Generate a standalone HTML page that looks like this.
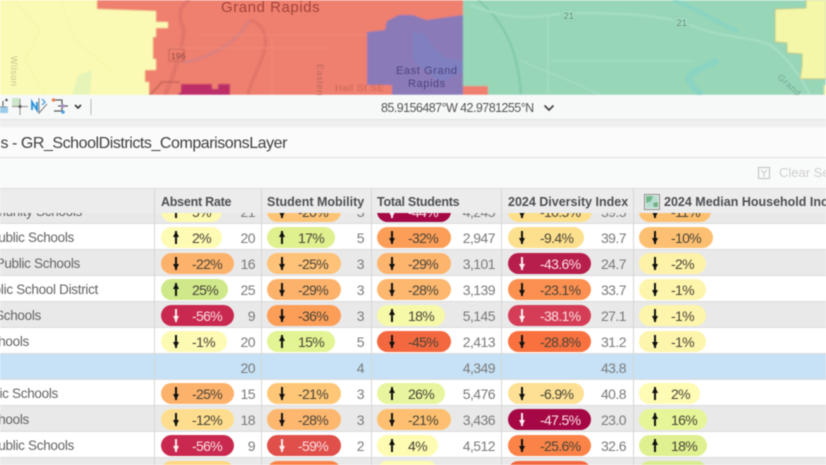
<!DOCTYPE html>
<html><head><meta charset="utf-8"><style>
html,body{margin:0;padding:0;background:#fff}
#w{position:relative;width:826px;height:465px;overflow:hidden;font-family:"Liberation Sans",sans-serif;filter:blur(.4px)}
#w div,#w svg{position:absolute}
.r{left:0;width:826px;height:26px;background:#fff;box-shadow:inset 0 -1px 0 #dcdcdc}
.g{background:#e9e9e9}
.b{background:#c7e2f6}
.n{top:6px;font-size:13.5px;line-height:16px;color:#636363;white-space:nowrap;letter-spacing:-.3px}
.v{top:6px;font-size:14px;line-height:16px;color:#7a7a7a;white-space:nowrap;letter-spacing:-.55px;text-align:right}
.c1{right:571px}.c2{right:462px}.c3{right:331px}.c4{right:200px}
.p{top:3px;height:21px;border-radius:10.5px;font-size:14px;line-height:22px;color:#4a4436;letter-spacing:-.65px;white-space:nowrap}
.w{color:#f9dfe3}
.p span{position:absolute;left:31px;top:0}
.q span{left:32px}
.i span{left:32px}
.p i{position:absolute;left:14px;top:4px;width:2px;height:13px;background:#111}
.q i{left:13px}.i i{left:15px}
.p i:after{content:"";position:absolute;left:-2px;border-left:3px solid transparent;border-right:3px solid transparent}
.d i:after{bottom:0;border-top:6px solid #111}
.u i:after{top:0;border-bottom:6px solid #111}
.w i{background:#fbeef0}
.w.d i:after{border-top-color:#fbeef0}
.s{top:189px;width:1px;height:276px;background:#d6d6d6}
.h{top:194px;font-size:12.5px;line-height:16px;font-weight:bold;color:#4d4f53;white-space:nowrap}
</style></head><body><div id="w">

<svg style="left:0;top:0" width="826" height="95" viewBox="0 0 826 95">
<defs><filter id="bl" x="-5%" y="-5%" width="110%" height="110%"><feGaussianBlur stdDeviation=".7"/></filter></defs>
<g filter="url(#bl)">
<rect width="826" height="95" fill="#ef7f6e"/>
<polygon points="0,0 97,0 97,9 156,11 156,22 168,22 168,28 156,28 156,37 153,37 153,59 156,59 156,70 145,70 145,82 149,82 149,95 0,95" fill="#fafab4"/>
<path d="M72 95 L78 75 L92 70 L90 95Z" fill="#e6f4b8"/>
<path d="M14 0 L40 30 L25 60 L45 95 M60 0 L75 40 L110 70" stroke="#f6f4aa" stroke-width="1" fill="none"/>
<path d="M190 0 C178 6 178 18 184 30 C182 50 176 70 165 95" stroke="#e2766a" stroke-width="4" fill="none"/>
<path d="M183 62 C205 60 235 45 250 20" stroke="#d98080" stroke-width="3" fill="none"/>
<path d="M250 20 C268 26 268 42 262 58 C255 76 250 85 248 95" stroke="#e07468" stroke-width="3" fill="none"/>
<path d="M150 95 L162 82 L180 82" stroke="#a8564c" stroke-width="1" fill="none"/>
<path d="M200 35 H370 M272 38 V95 M165 48 H330" stroke="#f28d7c" stroke-width="1" fill="none"/>
<polygon points="181,84 212,84 212,89 218,89 218,84 230,84 230,95 177,95 181,92" fill="#bd2f68"/>
<polygon points="367,32 385,30 387,21 399,15 413,15 426,20 463,15 463,95 392,95 392,87 367,85" fill="#8a7ab8"/>
<rect x="367" y="85" width="25" height="10" fill="#ef7f6e"/>
<polygon points="413,32 424,34 434,48 445,58 463,60 463,72 440,82 420,66 413,60" fill="#8080c0"/>
<rect x="463" y="0" width="363" height="95" fill="#98d6b8"/>
<rect x="463" y="86" width="25" height="9" fill="#ef7f6e"/>
<path d="M478 0 C500 18 518 45 521 95" stroke="#7fc7a8" stroke-width="2" fill="none"/>
<path d="M470 5 C510 20 530 18 560 14 C610 12 660 14 690 25 C720 38 750 36 770 45 C785 55 800 75 810 95" stroke="#a8e0c4" stroke-width="2" fill="none"/>
<path d="M548 15 V95 M550 61 H695 M520 60 C540 70 560 75 600 95" stroke="#a6dfc3" stroke-width="1.200" fill="none"/>
<path d="M673 0 C695 8 710 18 738 32" stroke="#8ad4c1" stroke-width="4.500" fill="none"/>
<path d="M718 60 C700 70 685 72 690 82 C695 90 698 92 702 95" stroke="#8ad4c1" stroke-width="7" fill="none"/>
<polygon points="806,0 806,8 775,9 775,42 787,43 787,53 802,54 802,66 800,79 826,79 826,0" fill="#f5f7a8" stroke="#a8b678" stroke-width=".7"/>
<rect x="824" y="85" width="2" height="10" fill="#f5f7a8"/>
<rect x="562" y="10" width="13" height="11" fill="#a2dcc0" stroke="#88c9aa" stroke-width=".6"/>
<rect x="675" y="17" width="13" height="11" fill="#a2dcc0" stroke="#88c9aa" stroke-width=".6"/>
<rect x="169" y="49" width="15" height="12" fill="#ef7f6e" stroke="#b8594e" stroke-width=".8"/>
</g>
<text x="563.5" y="19" font-size="9.500" fill="#5f8f7c" font-family="Liberation Sans">21</text>
<text x="676.5" y="26" font-size="9.500" fill="#5f8f7c" font-family="Liberation Sans">21</text>
<text x="171" y="59" font-size="8.500" fill="#8a4a40" font-family="Liberation Sans">196</text>
<text x="221" y="12" font-size="15" letter-spacing=".55" fill="#a2443b" font-family="Liberation Sans">Grand Rapids</text>
<text x="396" y="74" font-size="11" letter-spacing=".6" fill="#4d447e" font-family="Liberation Sans">East Grand</text>
<text x="408" y="87" font-size="11" letter-spacing=".6" fill="#4d447e" font-family="Liberation Sans">Rapids</text>
<text x="335" y="91" font-size="9.500" letter-spacing=".6" fill="#c9685b" font-family="Liberation Sans">Hall St SE</text>
<text transform="translate(317,64) rotate(90)" font-size="9" letter-spacing=".6" fill="#bb6a5e" font-family="Liberation Sans">Eastern</text>
<text transform="translate(11,56) rotate(90)" font-size="9" letter-spacing=".6" fill="#c6c58e" font-family="Liberation Sans">Wilson</text>
<text transform="translate(777,78) rotate(42)" font-size="9" letter-spacing=".6" fill="#73a995" font-family="Liberation Sans">Grand</text>
</svg>

<div style="left:0;top:95px;width:826px;height:24px;background:#f7f8f8"></div>
<div style="left:0;top:119px;width:826px;height:8px;background:#efefef;border-top:1px solid #e2e2e2;box-sizing:border-box"></div>
<div style="left:0;top:127px;width:826px;height:30px;background:#fbfbfb"></div>
<div style="left:0;top:157px;width:826px;height:1px;background:#dedede"></div>
<div style="left:0;top:158px;width:826px;height:31px;background:#f9fafa"></div>

<svg style="left:0;top:97px" width="100" height="22" viewBox="0 0 100 22">
<path d="M0 10 H7 M3 4 V9 M5 3 H8 M6.500 1.500 V4.500" stroke="#4a4a4a" stroke-width="1" fill="none"/>
<rect x="0" y="10" width="8" height="6" fill="#9ccbea"/>
<rect x="12" y="1" width="8" height="8" fill="#cfe8cb"/>
<path d="M12 9.500 H28 M20 2 V18" stroke="#9c9c9c" stroke-width="1.200" fill="none"/>
<circle cx="20" cy="9.500" r="1.500" fill="#555"/>
<path d="M32 13 V5 L37 13 V5" stroke="#2b93dc" stroke-width="1.900" fill="none"/>
<path d="M39 1 V16 L47 7" stroke="#808080" stroke-width="1" fill="none"/>
<path d="M42 2 L45 5 L42 8" stroke="#4aa3df" stroke-width="1.300" fill="none"/>
<path d="M53 3 H62 V14 H54 M58 9 H68" stroke="#5a5a5a" stroke-width="1.200" fill="none"/>
<circle cx="53.500" cy="3" r="1.800" fill="#e8834f"/><circle cx="63" cy="9" r="1.800" fill="#a58cc9"/><circle cx="63" cy="15" r="1.800" fill="#4aa3df"/>
<path d="M75 8 L78 11 L81 8" stroke="#333" stroke-width="1.600" fill="none"/>
<path d="M91 2 V18" stroke="#b8b8b8" stroke-width="1"/>
</svg>
<div style="left:381px;top:100px;font-size:12.5px;line-height:16px;color:#555;letter-spacing:-.55px;white-space:nowrap">85.9156487°W 42.9781255°N</div>
<svg style="left:543px;top:103px" width="12" height="10"><path d="M1.500 2.500 L6 7 L10.500 2.500" stroke="#444" stroke-width="1.700" fill="none"/></svg>

<div style="right:539px;top:134px;font-size:16px;line-height:20px;color:#3f3f3f;white-space:nowrap;letter-spacing:-.45px">s - GR_SchoolDistricts_ComparisonsLayer</div>

<svg style="left:757px;top:166px" width="15" height="14"><rect x="1.500" y="1.500" width="11" height="11" fill="none" stroke="#c6c6c6" stroke-width="1.200"/><path d="M4 4 L7 7 L10 4 M7 7 V11" stroke="#c6c6c6" fill="none"/></svg>
<div style="left:779px;top:165px;font-size:13px;line-height:16px;color:#cfcfcf;white-space:nowrap">Clear Selection</div>

<!-- row 0 partial -->
<div class="r g" style="top:198px">
<div class="n" style="right:744px">Community Schools</div>
<div class="p u" style="left:161px;width:61px;background:#fdf9b0"><i></i><span>5%</span></div><div class="v c1">21</div>
<div class="p d" style="left:267px;width:74px;background:#fdc477"><i></i><span>-20%</span></div><div class="v c2">3</div>
<div class="p w d" style="left:377px;width:74px;background:#a50845"><i></i><span>-44%</span></div><div class="v c3">4,245</div>
<div class="p q d" style="left:508px;width:84px;background:#fddf8c"><i></i><span>-10.5%</span></div><div class="v c4">39.5</div>
<div class="p i d" style="left:639px;width:72px;background:#fdc070"><i></i><span>-11%</span></div>
</div>

<!-- row 1 -->
<div class="r" style="top:224px">
<div class="n" style="right:752px">Public Schools</div>
<div class="p u" style="left:161px;width:61px;background:#fdfbb4"><i></i><span>2%</span></div><div class="v c1">20</div>
<div class="p u" style="left:267px;width:68px;background:#dff08f"><i></i><span>17%</span></div><div class="v c2">5</div>
<div class="p d" style="left:377px;width:74px;background:#fd9e58"><i></i><span>-32%</span></div><div class="v c3">2,947</div>
<div class="p q d" style="left:508px;width:76px;background:#fde08e"><i></i><span>-9.4%</span></div><div class="v c4">39.7</div>
<div class="p i d" style="left:639px;width:74px;background:#fdc072"><i></i><span>-10%</span></div>
</div>
<!-- row 2 -->
<div class="r g" style="top:250px">
<div class="n" style="right:746px">Public Schools</div>
<div class="p d" style="left:161px;width:73px;background:#fdb26b"><i></i><span>-22%</span></div><div class="v c1">16</div>
<div class="p d" style="left:267px;width:74px;background:#fec278"><i></i><span>-25%</span></div><div class="v c2">3</div>
<div class="p d" style="left:377px;width:74px;background:#fdb46d"><i></i><span>-29%</span></div><div class="v c3">3,101</div>
<div class="p q w d" style="left:508px;width:83px;background:#b81e4b"><i></i><span>-43.6%</span></div><div class="v c4">24.7</div>
<div class="p i d" style="left:639px;width:67px;background:#fdf2a8"><i></i><span>-2%</span></div>
</div>
<!-- row 3 -->
<div class="r" style="top:276px">
<div class="n" style="right:728px">Public School District</div>
<div class="p u" style="left:161px;width:67px;background:#cfe88a"><i></i><span>25%</span></div><div class="v c1">25</div>
<div class="p d" style="left:267px;width:74px;background:#fdb26b"><i></i><span>-29%</span></div><div class="v c2">3</div>
<div class="p d" style="left:377px;width:74px;background:#fdb76f"><i></i><span>-28%</span></div><div class="v c3">3,139</div>
<div class="p q d" style="left:508px;width:83px;background:#fc9050"><i></i><span>-23.1%</span></div><div class="v c4">33.7</div>
<div class="p i d" style="left:639px;width:67px;background:#fdf5ac"><i></i><span>-1%</span></div>
</div>
<!-- row 4 -->
<div class="r g" style="top:302px">
<div class="n" style="right:785px">Schools</div>
<div class="p w d" style="left:161px;width:73px;background:#c9294f"><i></i><span>-56%</span></div><div class="v c1">9</div>
<div class="p d" style="left:267px;width:74px;background:#fd9e58"><i></i><span>-36%</span></div><div class="v c2">3</div>
<div class="p u" style="left:377px;width:68px;background:#f5f9a8"><i></i><span>18%</span></div><div class="v c3">5,145</div>
<div class="p q w d" style="left:508px;width:83px;background:#d43d55"><i></i><span>-38.1%</span></div><div class="v c4">27.1</div>
<div class="p i d" style="left:639px;width:67px;background:#fdf5ac"><i></i><span>-1%</span></div>
</div>
<!-- row 5 -->
<div class="r" style="top:328px">
<div class="n" style="right:797px">Schools</div>
<div class="p d" style="left:161px;width:66px;background:#fdfab4"><i></i><span>-1%</span></div><div class="v c1">20</div>
<div class="p u" style="left:267px;width:68px;background:#e2f494"><i></i><span>15%</span></div><div class="v c2">5</div>
<div class="p d" style="left:377px;width:74px;background:#f4683f"><i></i><span>-45%</span></div><div class="v c3">2,413</div>
<div class="p q d" style="left:508px;width:83px;background:#f9713f"><i></i><span>-28.8%</span></div><div class="v c4">31.2</div>
<div class="p i d" style="left:639px;width:67px;background:#fdf5ac"><i></i><span>-1%</span></div>
</div>
<!-- avg row -->
<div class="r b" style="top:354px">
<div class="v c1">20</div><div class="v c2">4</div><div class="v c3">4,349</div><div class="v c4">43.8</div>
</div>
<!-- row 7 -->
<div class="r" style="top:380px">
<div class="n" style="right:768px">Public Schools</div>
<div class="p d" style="left:161px;width:73px;background:#fdb26b"><i></i><span>-25%</span></div><div class="v c1">15</div>
<div class="p d" style="left:267px;width:74px;background:#fec778"><i></i><span>-21%</span></div><div class="v c2">3</div>
<div class="p u" style="left:377px;width:68px;background:#e8f59e"><i></i><span>26%</span></div><div class="v c3">5,476</div>
<div class="p q d" style="left:508px;width:76px;background:#fde094"><i></i><span>-6.9%</span></div><div class="v c4">40.8</div>
<div class="p i u" style="left:639px;width:61px;background:#fdfbb4"><i></i><span>2%</span></div>
</div>
<!-- row 8 -->
<div class="r g" style="top:406px">
<div class="n" style="right:797px">Schools</div>
<div class="p d" style="left:161px;width:73px;background:#fede8e"><i></i><span>-12%</span></div><div class="v c1">18</div>
<div class="p d" style="left:267px;width:74px;background:#fdb76f"><i></i><span>-28%</span></div><div class="v c2">3</div>
<div class="p d" style="left:377px;width:74px;background:#fec070"><i></i><span>-21%</span></div><div class="v c3">3,436</div>
<div class="p q w d" style="left:508px;width:83px;background:#a50845"><i></i><span>-47.5%</span></div><div class="v c4">23.0</div>
<div class="p i u" style="left:639px;width:68px;background:#e6f598"><i></i><span>16%</span></div>
</div>
<!-- row 9 -->
<div class="r" style="top:432px">
<div class="n" style="right:752px">Public Schools</div>
<div class="p w d" style="left:161px;width:73px;background:#c9294f"><i></i><span>-56%</span></div><div class="v c1">9</div>
<div class="p w d" style="left:267px;width:74px;background:#e04f4a"><i></i><span>-59%</span></div><div class="v c2">2</div>
<div class="p u" style="left:377px;width:61px;background:#fdfcb2"><i></i><span>4%</span></div><div class="v c3">4,512</div>
<div class="p q d" style="left:508px;width:83px;background:#fc8347"><i></i><span>-25.6%</span></div><div class="v c4">32.6</div>
<div class="p i u" style="left:639px;width:68px;background:#dff090"><i></i><span>18%</span></div>
</div>
<!-- row 10 -->
<div class="r g" style="top:458px">
<div class="p" style="left:161px;width:73px;background:#fed883"></div>
<div class="p" style="left:267px;width:74px;background:#fc8347"></div>
<div class="p" style="left:377px;width:61px;background:#fdfcb2"></div>
<div class="p" style="left:508px;width:83px;background:#f4683f"></div>
<div class="p" style="left:639px;width:68px;background:#d7ec8c"></div>
</div>

<!-- header -->
<div style="left:0;top:188px;width:826px;height:25px;background:#ececec;border-top:1px solid #dcdcdc;box-sizing:border-box"></div>
<div class="s" style="left:154px"></div><div class="s" style="left:261px"></div><div class="s" style="left:371px"></div><div class="s" style="left:501px"></div><div class="s" style="left:633px"></div>
<div class="h" style="left:161px;letter-spacing:-.25px">Absent Rate</div>
<div class="h" style="left:267px">Student Mobility</div>
<div class="h" style="left:377px;letter-spacing:-.25px">Total Students</div>
<div class="h" style="left:508px">2024 Diversity Index</div>
<svg style="left:644px;top:194px" width="17" height="16"><rect x=".5" y=".5" width="15" height="15" fill="#e8f0ea" stroke="#8a8a8a"/><rect x="2" y="2" width="12" height="12" fill="#b7dcd0"/><path d="M2 2 H9 L7 7 L2 9Z" fill="#6cb88a"/><path d="M9 9 L14 8 V13 L10 13Z" fill="#74b089"/></svg>
<div class="h" style="left:664px">2024 Median Household Income</div>
</div></body></html>
